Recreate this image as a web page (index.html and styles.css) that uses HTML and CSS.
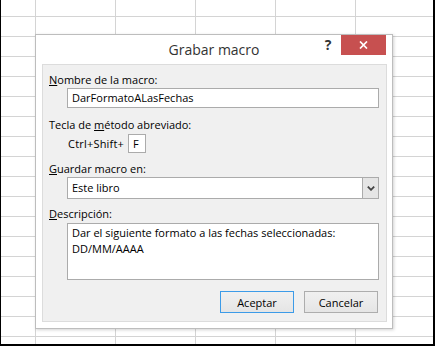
FILE: index.html
```html
<!DOCTYPE html>
<html lang="es">
<head>
<meta charset="utf-8">
<title>Grabar macro</title>
<link rel="stylesheet" href="styles.css">
</head>
<body>
<div class="sheet">
  <div class="dialog">
    <div class="titlebar">
      <div></div>
      <div class="title">Grabar macro</div>
      <div class="controls">
        <span class="help">?</span>
        <span class="close">
          <svg width="9" height="8" viewBox="0 0 9 8"><path d="M1 0.5 L8 7.5 M8 0.5 L1 7.5" stroke="#fff" stroke-width="1.7" fill="none"/></svg>
        </span>
      </div>
    </div>
    <div class="panel">
      <div class="label label-first"><u>N</u>ombre de la macro:</div>
      <div class="field field-text">DarFormatoALasFechas</div>
      <div class="label label-gap">Tecla de <u>m</u>étodo abreviado:</div>
      <div class="shortcut">
        <span class="shortcut-text">Ctrl+Shift+</span>
        <span class="keybox">F</span>
      </div>
      <div class="label label-gap2"><u>G</u>uardar macro en:</div>
      <div class="select">
        <span class="select-value">Este libro</span>
        <span class="select-btn">
          <svg width="8" height="5" viewBox="0 0 8 5"><path d="M0.8 0.6 L4 3.8 L7.2 0.6" stroke="#444" stroke-width="1.8" fill="none"/></svg>
        </span>
      </div>
      <div class="label label-gap3"><u>D</u>escripción:</div>
      <div class="textarea">Dar el siguiente formato a las fechas seleccionadas:<br>DD/MM/AAAA</div>
      <div class="buttons">
        <button class="btn btn-default">Aceptar</button>
        <button class="btn">Cancelar</button>
      </div>
    </div>
  </div>
</div>
</body>
</html>
```
FILE: styles.css
```css
* { box-sizing: border-box; }
html, body { margin: 0; padding: 0; }
body {
  font-family: "Open Sans", "Noto Sans", sans-serif;
  font-size: 11px;
  color: #000;
}
.sheet {
  position: relative;
  width: 435px;
  height: 346px;
  border-left: 1px solid #000;
  border-right: 2px solid #000;
  border-bottom: 2px solid #000;
  background-color: #fff;
  background-image:
    linear-gradient(to right, #d4d4d4 1px, transparent 1px),
    linear-gradient(to bottom, #d4d4d4 1px, transparent 1px);
  background-size: 80px 20px;
  background-position: 34px 16px;
  overflow: hidden;
}
.dialog {
  position: absolute;
  left: 34px;
  top: 34px;
  width: 358px;
  height: 295px;
  background: #fff;
  border: 1px solid #bdbdbd;
  box-shadow: 1px 1px 3px rgba(0,0,0,0.18);
  display: flex;
  flex-direction: column;
}
.titlebar {
  height: 29px;
  display: grid;
  grid-template-columns: 1fr auto 1fr;
  align-items: start;
}
.title {
  font-size: 14px;
  color: #333;
  line-height: 20px;
  padding-top: 5px;
}
.controls {
  display: flex;
  justify-content: flex-end;
  align-items: center;
  height: 20px;
  padding-right: 6px;
}
.help {
  width: 20px;
  margin-right: 3px;
  text-align: center;
  font-weight: 700;
  font-size: 14px;
  color: #333;
  line-height: 20px;
}
.close {
  width: 45px;
  height: 20px;
  background: #c75050;
  display: flex;
  align-items: center;
  justify-content: center;
}
.close svg { display: block; }
.panel {
  margin: 0 5px 6px 6px;
  height: 258px;
  border: 1px solid #dcdcdc;
  background: #f0f0f0;
  padding: 7px 7px 0 0;
  display: flex;
  flex-direction: column;
}
.label {
  line-height: 16px;
  padding-left: 6px;
  white-space: nowrap;
}
.label-gap { margin-top: 9px; }
.label-gap2 { margin-top: 8px; }
.label-gap3 { margin-top: 7px; }
.field, .select, .textarea, .shortcut {
  margin-left: 24px;
}
.field {
  height: 20px;
  border: 1px solid #ababab;
  background: #fff;
  padding: 0 4px;
  line-height: 18px;
}
.shortcut {
  margin-top: 1px;
  display: flex;
  align-items: center;
  height: 19px;
}
.shortcut-text {
  width: 61px;
  padding-left: 1px;
  line-height: 19px;
  white-space: nowrap;
  letter-spacing: 0.2px;
}
.keybox {
  width: 18px;
  height: 19px;
  border: 1px solid #ababab;
  background: #fff;
  padding-left: 4px;
  line-height: 17px;
}
.select {
  height: 22px;
  border: 1px solid #ababab;
  background: #fff;
  display: flex;
}
.select-value {
  flex: 1;
  padding-left: 4px;
  line-height: 20px;
}
.select-btn {
  width: 16px;
  border-left: 1px solid #ababab;
  background: #e5e5e5;
  display: flex;
  align-items: center;
  justify-content: center;
}
.select-btn svg { display: block; }
.textarea {
  margin-top: 1px;
  height: 57px;
  border: 1px solid #ababab;
  background: #fff;
  padding: 1px 4px;
  line-height: 16px;
}
.buttons {
  margin-top: 11px;
  display: flex;
  justify-content: flex-end;
  gap: 10px;
  padding-right: 1px;
}
.btn {
  width: 74px;
  height: 22px;
  border: 1px solid #adadad;
  background: linear-gradient(#f0f0f0, #e5e5e5);
  font-family: inherit;
  font-size: 11px;
  color: #000;
  padding: 0;
  margin: 0;
}
.btn-default {
  border-color: #3c9be8;
}
```
